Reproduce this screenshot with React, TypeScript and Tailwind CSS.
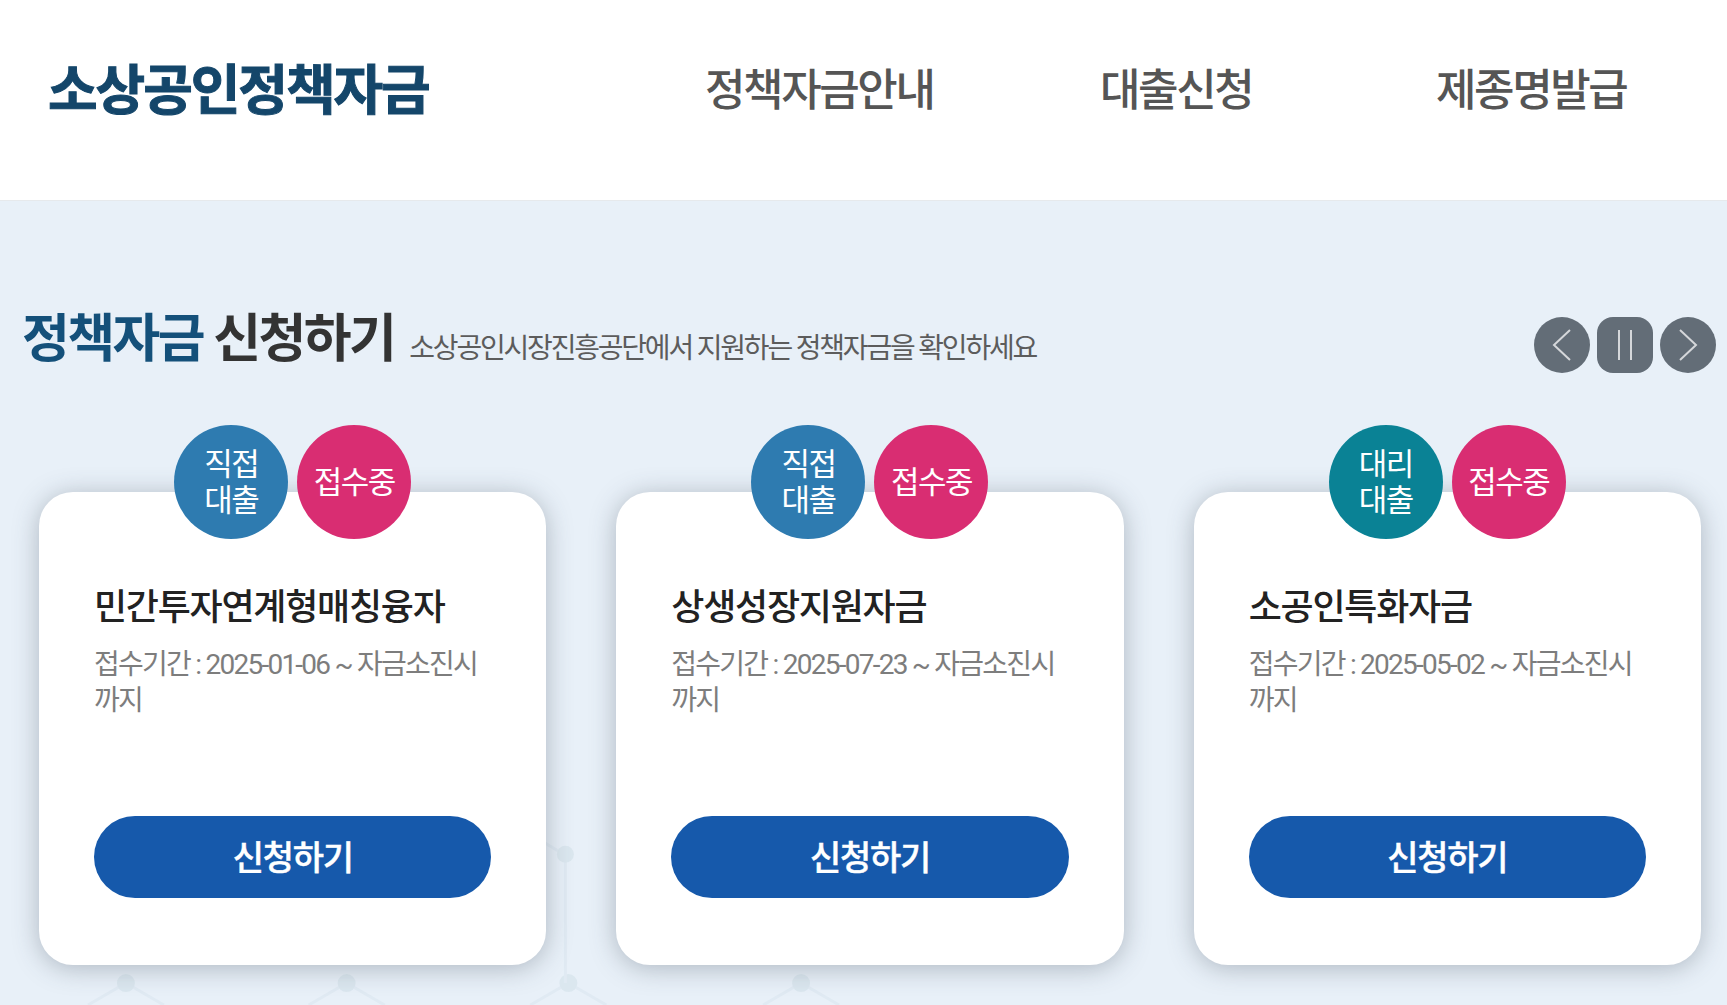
const FONT = '[font-family:Roboto,"Noto_Sans_CJK_KR",sans-serif]';

const funds = [
  { title: '민간투자연계형매칭융자', date: '2025-01-06', type: ['직접', '대출'], color: 'bg-[#2e7bb0]' },
  { title: '상생성장지원자금', date: '2025-07-23', type: ['직접', '대출'], color: 'bg-[#2e7bb0]' },
  { title: '소공인특화자금', date: '2025-05-02', type: ['대리', '대출'], color: 'bg-[#0a8295]' },
];

function Molecule() {
  const nodes = [125, 346, 568, 801];
  return (
    <svg className="absolute left-0 top-0 h-full w-full" viewBox="0 0 1727 805" fill="none">
      {nodes.map((x) => (
        <g key={x} stroke="#e0eaf3" strokeWidth="3">
          <path d={`M${x} 783 L${x - 38} 805 M${x} 783 L${x + 38} 805`} />
          <circle cx={x} cy="783" r="9" fill="#dbe7ef" stroke="none" />
        </g>
      ))}
      <path d="M565 655 L565 783 M565 655 L545 643" stroke="#e0eaf3" strokeWidth="3" />
      <circle cx="565" cy="654" r="8.5" fill="#dbe7ef" />
    </svg>
  );
}

function Card({ fund }: { fund: (typeof funds)[number] }) {
  return (
    <div className="relative flex h-[473px] flex-col rounded-[34px] bg-white px-[55px] pt-[93px] shadow-[0_3px_26px_rgba(60,70,85,0.34)]">
      <div className="absolute left-0 right-0 top-[-67px] flex justify-center gap-[9px]">
        <div className={`flex h-[114px] w-[114px] flex-col items-center justify-center rounded-full pt-[2px] text-[31px] leading-[36px] tracking-[-1.5px] text-white ${fund.color}`}>
          <span>{fund.type[0]}</span>
          <span>{fund.type[1]}</span>
        </div>
        <div className="flex h-[114px] w-[114px] items-center justify-center rounded-full bg-[#d92d72] pt-[2px] text-[31px] tracking-[-1.5px] text-white">
          접수중
        </div>
      </div>
      <h3 className="text-[36px] font-medium leading-[46px] tracking-[-1.25px] text-[#222]">{fund.title}</h3>
      <p className="mt-[16px] h-[169px] text-[28px] leading-[36px] tracking-[-1.75px] text-[#7d7d7d]">
        {`접수기간 : ${fund.date} ~ 자금소진시 까지`}
      </p>
      <button className="flex h-[82px] w-full items-center justify-center rounded-[41px] bg-[#1659ab] pt-[3px] text-[34px] font-medium tracking-[-1.3px] text-white [-webkit-text-stroke:0.4px_#fff]">
        신청하기
      </button>
    </div>
  );
}

export default function App() {
  return (
    <div className={`h-[1005px] overflow-hidden bg-white ${FONT}`}>
      <header className="flex h-[201px] items-center border-b border-[#e6e9ec] pb-[18px] pl-[48px] text-[#555]">
        <div className="w-[657px] text-[54px] font-bold tracking-[-2.1px] text-[#14466a] [-webkit-text-stroke:1px_#14466a]">소상공인정책자금</div>
        <nav className="flex items-center text-[44px] font-medium tracking-[-2.4px]">
          <a className="w-[395px]">정책자금안내</a>
          <a className="w-[336px]">대출신청</a>
          <a>제종명발급</a>
        </nav>
      </header>

      <main className="relative h-[804px] bg-[#e8f0f8]">
        <Molecule />
        <div className="relative">
          <div className="flex h-[224px] items-start pl-[22px] pr-[11px] pt-[111px]">
            <h2 className="text-[52px] font-bold leading-[56px] tracking-[-2.6px] text-[#333]">
              <span className="text-[#14507a]">정책자금</span> 신청하기
            </h2>
            <p className="ml-[15px] mt-[19px] text-[28px] leading-[36px] tracking-[-2.2px] text-[#5c5c5c]">
              소상공인시장진흥공단에서 지원하는 정책자금을 확인하세요
            </p>
            <div className="ml-auto mt-[5px] flex gap-[7px]">
              <button className="flex h-[56px] w-[56px] items-center justify-center rounded-full bg-[#636d77]">
                <svg width="22" height="34" viewBox="0 0 22 34" fill="none" stroke="#d5d7da" strokeWidth="2">
                  <path d="M19 2 L3 17 L19 32" />
                </svg>
              </button>
              <button className="flex h-[56px] w-[56px] items-center justify-center rounded-[16px] bg-[#636d77]">
                <svg width="18" height="30" viewBox="0 0 18 30" fill="none" stroke="#d5d7da" strokeWidth="2">
                  <path d="M3 0 L3 30 M15 0 L15 30" />
                </svg>
              </button>
              <button className="flex h-[56px] w-[56px] items-center justify-center rounded-full bg-[#636d77]">
                <svg width="22" height="34" viewBox="0 0 22 34" fill="none" stroke="#d5d7da" strokeWidth="2">
                  <path d="M3 2 L19 17 L3 32" />
                </svg>
              </button>
            </div>
          </div>
          <div className="mt-[67px] grid grid-cols-3 gap-[70px] pl-[39px] pr-[26px]">
            {funds.map((fund) => (
              <Card key={fund.title} fund={fund} />
            ))}
          </div>
        </div>
      </main>
    </div>
  );
}
